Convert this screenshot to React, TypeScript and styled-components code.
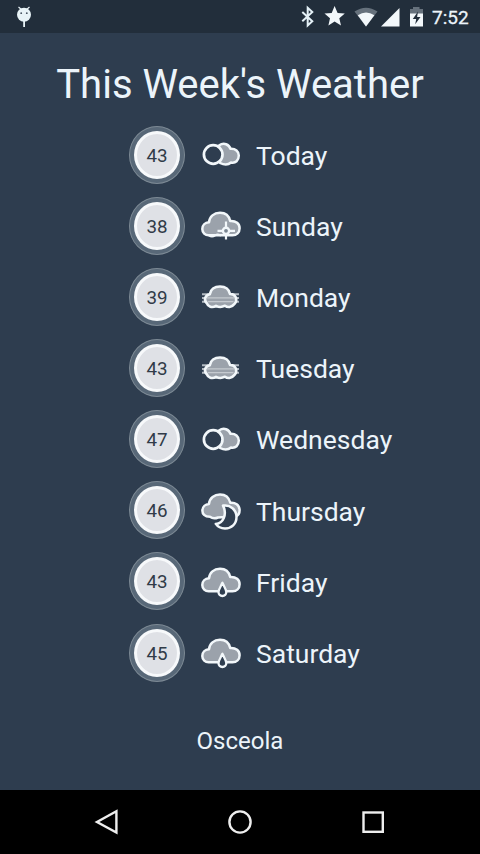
import React from "react";
import styled, { createGlobalStyle } from "styled-components";

const GlobalStyle = createGlobalStyle`
  * { box-sizing: border-box; }
  body { margin: 0; background: #2e3d4f; font-family: Roboto, "Liberation Sans", sans-serif; }
`;

const Screen = styled.div`
  width: 480px;
  height: 854px;
  display: flex;
  flex-direction: column;
  background: #2e3d4f;
  color: #ecf4fa;
  overflow: hidden;
`;

const StatusBar = styled.header`
  height: 33px;
  flex: none;
  display: flex;
  justify-content: space-between;
  background: #222e3b;
`;

const StatusIcons = styled.div`
  display: flex;
`;

const Clock = styled.span`
  width: 48px;
  font-size: 19px;
  font-weight: 400;
  -webkit-text-stroke: 0.3px #ecf4fa;
  line-height: 35px;
  white-space: nowrap;
`;

const Content = styled.main`
  flex: 1;
  display: flex;
  flex-direction: column;
  align-items: center;
`;

const Title = styled.h1`
  margin: 27px 0 0;
  height: 59px;
  font-size: 40px;
  font-weight: 400;
  line-height: 50px;
  white-space: nowrap;
`;

const Forecast = styled.ul`
  list-style: none;
  margin: 0;
  padding: 0 0 0 129px;
  width: 100%;
`;

const DayRow = styled.li`
  height: 71.15px;
  display: flex;
  align-items: center;
`;

const Badge = styled.div`
  width: 56px;
  height: 58px;
  flex: none;
  padding: 4px 4px 4px 4px;
  border-radius: 50%;
  background: #586878;
  border: 1px solid #7c8994;
`;

const Temperature = styled.div`
  width: 100%;
  height: 100%;
  display: flex;
  align-items: center;
  justify-content: center;
  padding-top: 2px;
  border: 3px solid #f7f9fb;
  border-radius: 50%;
  background: #dfe1e6;
  color: #313b48;
  font-size: 18.8px;
`;

const IconSvg = styled.svg`
  width: 50px;
  height: 50px;
  margin: 1px 11px 0 10px;
  flex: none;
`;

const DayName = styled.span`
  font-size: 26.5px;
  line-height: 32px;
  padding-top: 2.6px;
`;

const City = styled.footer`
  margin-top: 37px;
  font-size: 24px;
  line-height: 32px;
`;

const NavBar = styled.nav`
  height: 64px;
  flex: none;
  background: #000;
`;

type Weather = "cloudyNight" | "sleet" | "fog" | "moonCloud" | "rain";

const bg = "#2e3d4f";
const line = "#f2f7fa";
const fill = "#9ba2ab";
const cloud =
  "M14.5 34.2C10 34.6 7.3 31.5 7.3 28C7.3 24.5 10 21.6 14 21.3C14.5 15.5 19 11.8 25 11.8C30 11.8 34 14.8 35.2 20C41 19.6 44.6 22.8 44.6 27.2C44.6 31.5 41.5 34.2 37.5 34.2Z";

function WeatherIcon({ kind }: { kind: Weather }) {
  return (
    <IconSvg viewBox="0 0 50 50" fill={fill} stroke={line} strokeWidth="2.5" strokeLinejoin="round">
      {kind === "cloudyNight" && (
        <>
          <path d="M24 15.5C29 12 34 14.5 35.5 18.8C40.5 18.5 43.8 21.3 43.8 25.6C43.8 30.5 40.5 33.5 36 32.5C33.5 34.8 29 35 25 33Z" />
          <circle cx="18.2" cy="24.5" r="9.3" fill={bg} strokeWidth="2.7" />
        </>
      )}
      {kind === "sleet" && (
        <>
          <path d={cloud} />
          <path d="M14 34.5q3 2.2 6 0t6 .2" fill="none" strokeWidth="2" />
          <path d="M31 20.5V38.5M22.5 29.8H40" fill="none" strokeWidth="2.2" />
          <circle cx="31" cy="29.8" r="3.1" fill="#788490" strokeWidth="2.4" />
        </>
      )}
      {kind === "fog" && (
        <>
          <path d="M7 22.2H44M7 26H44M7 29.8H44" strokeWidth="2" stroke="#b3bac2" />
          <path d="M11.8 31.2C8.5 28.2 10 23 14.8 22.2C15.5 17.5 19.5 14.5 25 14.5C30.5 14.5 34 17.2 35 22C41 21.7 43 28.2 39.5 31.9C36.5 35.7 32.5 35.7 30 33.7Q25.5 36.2 21 33.9C17 36.2 13 34.5 11.8 31.2Z" strokeWidth="2.6" />
          <path d="M12 25.8H39.5M13 29.6H38.5" strokeWidth="1.3" stroke="#c5cad0" />
        </>
      )}
      {kind === "moonCloud" && (
        <>
          <path d="M23 31.5Q18.5 33.5 15 30.8C9.5 30.8 7.3 27.8 7.4 24.5C7.5 20.5 10.5 18.2 14 18C14.5 12 19.5 8.5 25 8.5C30 8.5 34 11.5 35.3 16.8C40 16.2 44.6 19 44.6 24.3C44.6 27.3 43.5 29.2 41 30.3Z" />
          <path d="M28 19.6C35.5 18.3 41.5 24 41.5 31C41.5 38 36.5 42.5 30 42.5C25.8 42.4 22.7 40.7 20.8 37.9C28 37.6 32.5 28.5 28 19.6Z" fill={bg} />
        </>
      )}
      {kind === "rain" && (
        <>
          <path d={cloud} />
          <path d="M27.4 25.8C25.5 30 23.5 32.5 23.5 35.1C23.5 37.4 25.2 39 27.4 39C29.6 39 31.3 37.4 31.3 35.1C31.3 32.5 29.3 30 27.4 25.8Z" fill={bg} strokeWidth="2.3" />
        </>
      )}
    </IconSvg>
  );
}

const days: { name: string; temp: number; kind: Weather }[] = [
  { name: "Today", temp: 43, kind: "cloudyNight" },
  { name: "Sunday", temp: 38, kind: "sleet" },
  { name: "Monday", temp: 39, kind: "fog" },
  { name: "Tuesday", temp: 43, kind: "fog" },
  { name: "Wednesday", temp: 47, kind: "cloudyNight" },
  { name: "Thursday", temp: 46, kind: "moonCloud" },
  { name: "Friday", temp: 43, kind: "rain" },
  { name: "Saturday", temp: 45, kind: "rain" },
];

export default function App() {
  return (
    <>
      <GlobalStyle />
      <Screen>
        <StatusBar>
          <svg width="50" height="33" fill="#e8f3f7">
            <circle cx="24" cy="14.8" r="7" />
            <path d="M18.5 7l3.5 3M29.5 7L26 10" stroke="#e8f3f7" strokeWidth="1.2" />
            <rect x="23.2" y="21" width="1.8" height="6" />
            <circle cx="21.2" cy="13.2" r="0.9" fill="#44515f" />
            <circle cx="26.8" cy="13.2" r="0.9" fill="#44515f" />
          </svg>
          <StatusIcons>
            <svg width="142" height="33" viewBox="290 0 142 33" fill="#f3f8fb">
              <path d="M302.3 12l10 9.2-4.6 4.3V7.8l4.6 4.3-10 9.2" fill="none" stroke="#e4f0f6" strokeWidth="2" />
              <path d="M334.6 6l3 6.9 7.2.6-5.5 4.8 1.7 7.2-6.4-3.9-6.2 3.9 1.6-7.2-5.5-4.8 7.2-.6z" />
              <path d="M354.5 11.5Q366 3.8 377.5 11.5L366 26.5z" fill="#66717c" />
              <path d="M357.8 15.2Q366 10 374.4 15.2L366 26.5z" />
              <path d="M399.5 8v18.4H381z" />
              <path d="M410 9h3V7h6.5v2h3.5v5h-13z" fill="#66717c" />
              <path d="M410 13.5h13v13h-13z" />
              <path d="M418 11.5l-5.2 7.4h3.4l-1 5.3 5.3-7.3h-3.4z" fill="#222e3b" />
            </svg>
            <Clock>7:52</Clock>
          </StatusIcons>
        </StatusBar>
        <Content>
          <Title>This Week's Weather</Title>
          <Forecast>
            {days.map((d) => (
              <DayRow key={d.name}>
                <Badge>
                  <Temperature>{d.temp}</Temperature>
                </Badge>
                <WeatherIcon kind={d.kind} />
                <DayName>{d.name}</DayName>
              </DayRow>
            ))}
          </Forecast>
          <City>Osceola</City>
        </Content>
        <NavBar>
          <svg width="480" height="64" fill="none" stroke="#eeeeee" strokeWidth="2.4">
            <path d="M116.4 21.2V42.6L97 32z" />
            <circle cx="240" cy="32" r="10.6" />
            <rect x="363.5" y="22.5" width="19.3" height="19.3" />
          </svg>
        </NavBar>
      </Screen>
    </>
  );
}
